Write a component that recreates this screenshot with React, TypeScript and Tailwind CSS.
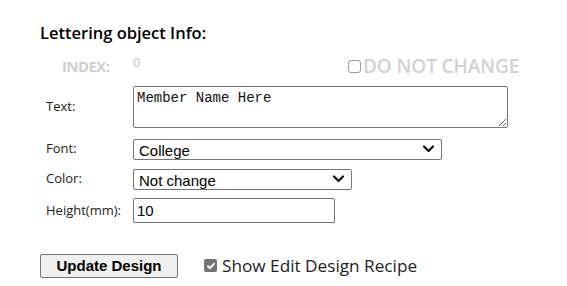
import React from 'react';

const Chevron: React.FC = () => (
  <svg className="w-[13px] h-[9px]" viewBox="0 0 13 9" fill="none" stroke="#111" strokeWidth={2.2} strokeLinecap="round" strokeLinejoin="round">
    <path d="M2 2.5l4.5 4.5L11 2.5" />
  </svg>
);

const App: React.FC = () => {
  const label = "ml-[6px] w-[87px] text-[13px] text-[#222] font-['Open_Sans',sans-serif]";
  const sel =
    "appearance-none w-full h-full border border-[#767676] rounded-[2px] bg-white pl-[5px] text-[15px] text-black font-['Liberation_Sans',Arial,sans-serif] outline-none";

  return (
    <div className="w-[567px] h-[286px] bg-white pl-[40px] pt-[22px]">
      {/* Titulo */}
      <h2 className="text-[16.5px] leading-[22px] font-semibold text-black font-['Open_Sans',sans-serif]">
        Lettering object Info:
      </h2>

      {/* Index */}
      <div className="flex items-center h-[24px] mt-[10px]">
        <span className="ml-[22px] w-[71px] text-[15px] font-bold text-[#cfcfcf] tracking-[-0.6px] font-['Open_Sans',sans-serif]">
          INDEX:
        </span>
        <span className="w-[215px] text-[13px] font-semibold text-[#cfcfcf] -mt-[6px] font-['Open_Sans',sans-serif]">0</span>
        <span className="w-[13px] h-[13px] border border-[#9a9a9a] rounded-[3px] bg-white"></span>
        <span className="ml-[2px] text-[19px] font-semibold text-[#d2d2d2] tracking-[-0.1px] font-['Open_Sans',sans-serif]">
          DO NOT CHANGE
        </span>
      </div>

      {/* Text */}
      <div className="flex items-center mt-[8px]">
        <span className={label}>Text:</span>
        <textarea
          defaultValue="Member Name Here"
          className="w-[375px] h-[42px] border border-[#767676] rounded-[2px] px-[3px] py-[3px] text-[14px] leading-[17px] text-[#111] font-['Liberation_Mono','DejaVu_Sans_Mono',monospace] outline-none"
        />
      </div>

      {/* Font */}
      <div className="flex items-center mt-[10px] h-[21px]">
        <span className={label}>Font:</span>
        <div className="relative w-[309px] h-[21px]">
          <select className={sel} defaultValue="College">
            <option>College</option>
          </select>
          <span className="absolute right-[7px] top-[6px] pointer-events-none"><Chevron /></span>
        </div>
      </div>

      {/* Color */}
      <div className="flex items-center mt-[9px] h-[21px]">
        <span className={label}>Color:</span>
        <div className="relative w-[219px] h-[21px]">
          <select className={sel} defaultValue="Not change">
            <option>Not change</option>
          </select>
          <span className="absolute right-[7px] top-[6px] pointer-events-none"><Chevron /></span>
        </div>
      </div>

      {/* Height */}
      <div className="flex items-center mt-[9px] h-[25px]">
        <span className={label}>Height(mm):</span>
        <input
          defaultValue="10"
          className="w-[202px] h-[25px] border border-[#767676] rounded-[2px] bg-white px-[3px] text-[15px] text-black font-['Liberation_Sans',Arial,sans-serif] outline-none"
        />
      </div>

      {/* Acoes */}
      <div className="flex items-center mt-[30px]">
        <button className="w-[138px] h-[24px] bg-[#efefef] border border-[#767676] rounded-[2px] text-[15px] font-bold text-black font-['Liberation_Sans',Arial,sans-serif]">
          Update Design
        </button>
        <span className="ml-[26px] w-[13px] h-[13px] rounded-[2px] bg-[#737373] flex items-center justify-center">
          <svg className="w-[10px] h-[10px]" viewBox="0 0 10 10" fill="none" stroke="#fff" strokeWidth={2} strokeLinecap="round" strokeLinejoin="round">
            <path d="M2 5.2l2 2L8 2.8" />
          </svg>
        </span>
        <span className="ml-[5px] text-[17.2px] text-[#222] font-['Open_Sans',sans-serif]">Show Edit Design Recipe</span>
      </div>
    </div>
  );
};

export default App;
